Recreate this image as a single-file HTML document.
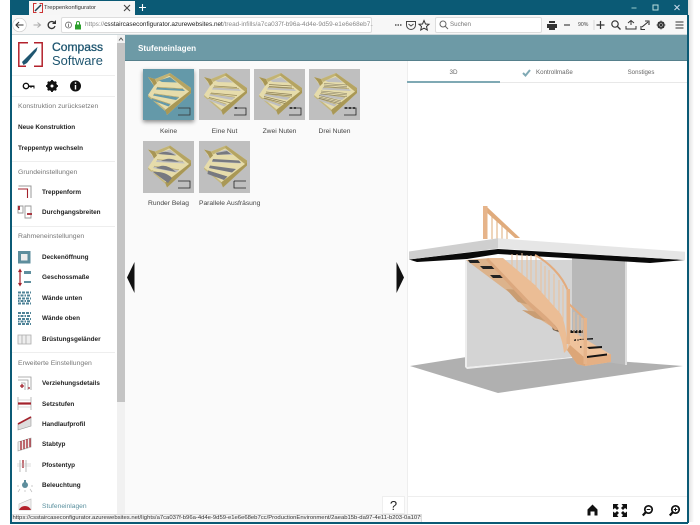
<!DOCTYPE html>
<html><head><meta charset="utf-8"><title>Treppenkonfigurator</title>
<style>
html,body{margin:0;padding:0;width:700px;height:525px;overflow:hidden;background:#fff;font-family:"Liberation Sans",sans-serif}
.a{position:absolute;white-space:nowrap}
.h{left:18px;font-size:6.850px;color:#777;line-height:10px;margin-top:1px}
.i{left:42px;font-size:6.400px;color:#222;font-weight:bold;line-height:10px;margin-top:1px}
.b{left:18px;font-size:6.400px;color:#222;font-weight:bold;line-height:10px;margin-top:1px}
.l{font-size:6.700px;color:#444;line-height:10px;text-align:center;margin-top:1px}
.sep{position:absolute;left:12px;width:103px;height:1px;background:#eee}
</style></head><body>
<svg width="0" height="0" style="position:absolute"><defs>
<symbol id="st" viewBox="0 0 51 51">
<path d="M5 8L12 10L27 4L48 19V24L24 46L22 40L5 26L11 17Z" fill="#e6dcab"/>
<path d="M5 8L12 10L14 14L11 17L9 13Z" fill="#a89655"/>
<path d="M12 10L27 4L28 6L14 13Z" fill="#c2b374"/>
<path d="M27 4L48 19V24L44 21L26 6.500Z" fill="#b5a462"/>
<path d="M22 41L48 21V24L24 46Z" fill="#a99856"/>
<path d="M5 26L22 40V42L5 27.500Z" fill="#c6b87c"/>
<path d="M16 11.500L27 8L34 13.500L19 13Z" fill="currentColor"/>
<path d="M14 18.500L40 20L42 22L13 20.500Z" fill="currentColor"/>
<path d="M11 25L36 28.500L33 31L10 26.500Z" fill="currentColor"/>
<path d="M9 29.500L27.500 35.500L25.500 37.500L8.500 31Z" fill="currentColor"/>
<path d="M14 18.200L40 19.700M11 24.700L36 28.200M9 29.200L27.500 35.200" stroke="#b3a468" stroke-width=".7" fill="none"/>
</symbol>
</defs></svg>

<!-- window chrome -->
<div class="a" style="left:10px;top:0;width:678px;height:15px;background:#0b5a75"></div>
<div class="a" style="left:29px;top:1px;width:106px;height:14px;background:#f6f6f6"></div>
<svg class="a" style="left:33px;top:3px" width="10" height="10" viewBox="0 0 10 10"><path d="M3.500.5H.5V9.500H3.500M6.500.5H9.500V9.500H6.500" fill="none" stroke="#c33" stroke-width="1"/><path d="M2 8L8 2" stroke="#245" stroke-width="1.500"/></svg>
<div class="a" style="left:44px;top:3px;font-size:5.800px;line-height:10px;color:#333">Treppenkonfigurator</div>
<svg class="a" style="left:123px;top:4px" width="8" height="8"><path d="M1 1L7 7M7 1L1 7" stroke="#444" stroke-width="1.100"/></svg>
<svg class="a" style="left:138px;top:3px" width="9" height="9"><path d="M4.500 1V8M1 4.500H8" stroke="#fff" stroke-width="1.100"/></svg>
<svg class="a" style="left:630px;top:3px" width="50" height="10"><path d="M1.500 5H6.500" stroke="#9cc" stroke-width="1"/><rect x="23" y="2" width="5" height="5" fill="none" stroke="#bdd" stroke-width="1"/><path d="M44.500 2L49.500 7M49.500 2L44.500 7" stroke="#cde" stroke-width="1"/></svg>
<div class="a" style="left:10px;top:15px;width:678px;height:20px;background:#f7f7f7"></div>
<div class="a" style="left:10px;top:34px;width:678px;height:1px;background:#cfd8db"></div>
<svg class="a" style="left:12px;top:17px" width="48" height="16"><circle cx="7.500" cy="8" r="6.800" fill="#fff" stroke="#ccc" stroke-width=".7"/><path d="M11.500 8H4.500M7 5L4 8L7 11" fill="none" stroke="#333" stroke-width="1.100"/><path d="M28 8H21.500M25.500 5.500L28.500 8L25.500 10.500" fill="none" stroke="#aaa" stroke-width="1"/><path d="M42.500 6A3.500 3.500 0 1 0 43 9" fill="none" stroke="#333" stroke-width="1.300"/><path d="M44 3V7H40Z" fill="#333"/></svg>
<div class="a" style="left:61px;top:17px;width:311px;height:16px;background:#fff;border:1px solid #ddd;box-sizing:border-box;border-radius:2px"></div>
<svg class="a" style="left:65px;top:20px" width="18" height="10"><circle cx="3.500" cy="5" r="3" fill="none" stroke="#666" stroke-width=".8"/><path d="M3.500 4V7M3.500 2.700V3.400" stroke="#666" stroke-width=".8"/><rect x="10" y="4.500" width="6" height="5" fill="#2ca02c"/><path d="M11.500 5V3A1.500 1.500 0 0 1 14.500 3V5" fill="none" stroke="#2ca02c" stroke-width="1"/></svg>
<div class="a" style="left:85px;top:20px;font-size:6.400px;line-height:10px;color:#888;width:288px;overflow:hidden">https://<span style="color:#222">csstaircaseconfigurator.azurewebsites.net</span>/tread-infills/a7ca037f-b96a-4d4e-9d59-e1e6e68eb7..</div>
<svg class="a" style="left:392px;top:18px" width="40" height="14"><path d="M3 7H4.500M5.500 7H7M8 7H9.500" stroke="#333" stroke-width="1.200"/><path d="M14.500 3.500H23.500V7A4.500 4.500 0 0 1 14.500 7Z" fill="none" stroke="#444" stroke-width="1"/><path d="M16.500 6L19 8L21.500 6" fill="none" stroke="#444" stroke-width="1"/><path d="M32 2.500L33.500 6L37 6.300L34.500 8.500L35.300 12L32 10.200L28.700 12L29.500 8.500L27 6.300L30.500 6Z" fill="none" stroke="#333" stroke-width="1"/></svg>
<div class="a" style="left:435px;top:17px;width:107px;height:16px;background:#fff;border:1px solid #ddd;box-sizing:border-box;border-radius:2px"></div>
<svg class="a" style="left:439px;top:20px" width="10" height="10"><circle cx="4" cy="4" r="3" fill="none" stroke="#666" stroke-width="1"/><path d="M6 6L9 9" stroke="#666" stroke-width="1"/></svg>
<div class="a" style="left:450px;top:20px;font-size:6.200px;line-height:10px;color:#777">Suchen</div>
<svg class="a" style="left:547px;top:18px" width="125" height="14">
<path d="M2 3H8V5H2ZM0 6H10V10H0ZM2 9H8V12H2Z" fill="#333"/>
<path d="M17 7H23" stroke="#444" stroke-width="1.200"/>
<path d="M47 2V12" stroke="#ccc" stroke-width=".7"/>
<path d="M53.500 3V11M49.500 7H57.500" stroke="#333" stroke-width="1.200"/>
<circle cx="68" cy="6" r="3.200" fill="none" stroke="#333" stroke-width="1.200"/><path d="M70.500 8.500L73.500 11.500" stroke="#333" stroke-width="1.300"/>
<path d="M81 5L84 2.500L87 5M84 3V7M79 8V11H89V8" fill="none" stroke="#333" stroke-width="1"/>
<path d="M95 9L101 4M98 3H102V7M94 8V11.500H98" fill="none" stroke="#333" stroke-width="1.100"/>
<circle cx="114" cy="7" r="3" fill="none" stroke="#333" stroke-width="1.500"/><path d="M114 2.500V11.500M109.500 7H118.500M111 4L117 10M117 4L111 10" stroke="#333" stroke-width=".8"/>
</svg>
<div class="a" style="left:578px;top:20px;font-size:5.200px;line-height:10px;color:#444">90%</div>
<svg class="a" style="left:675px;top:20px" width="10" height="10"><path d="M0 2H8M0 5H8M0 8H8" stroke="#333" stroke-width="1.100" transform="translate(.5 0)"/></svg>
<div class="a" style="left:688px;top:0;width:6px;height:522px;background:linear-gradient(90deg,#ddd,#fff)"></div>

<!-- frame -->
<div class="a" style="left:10px;top:15px;width:1.500px;height:508px;background:#0b5a75"></div>
<div class="a" style="left:687px;top:15px;width:1.500px;height:508px;background:#0b5a75"></div>
<div class="a" style="left:10px;top:522px;width:678px;height:1.500px;background:#0b5a75"></div>

<!-- header -->
<div class="a" style="left:125px;top:35px;width:562px;height:26px;background:#6d9aa6;border-bottom:1px solid #56808c;box-sizing:border-box"></div>
<div class="a" style="left:138px;top:43px;font-size:8.100px;font-weight:bold;line-height:11px;color:#fff">Stufeneinlagen</div>

<!-- sidebar -->
<div class="a" style="left:116.500px;top:35px;width:8.500px;height:487px;background:#f1f1f1"></div>
<div class="a" style="left:117px;top:43px;width:7.500px;height:359px;background:#c4c4c4"></div>
<svg class="a" style="left:117px;top:36px" width="8" height="6"><path d="M2 4.500L4 2L6 4.500" fill="none" stroke="#555" stroke-width="1"/></svg>
<svg class="a" style="left:18px;top:42px" width="25" height="25" viewBox="0 0 25 25"><path d="M10 .8H.8V24.200H8M16 .8H24.200V24.200H16" fill="none" stroke="#b3222c" stroke-width="1.500"/><path d="M4 20L7 17L16 8L19.500 5L18.500 9L9 21L5.500 23Z" fill="#1f5670"/></svg>
<div class="a" style="left:52px;top:41px;font-size:12.100px;line-height:13px;color:#1f5670;-webkit-text-stroke:.3px #1f5670">Compass</div>
<div class="a" style="left:52px;top:54px;font-size:12.900px;line-height:13px;color:#1f5670">Software</div>
<div class="sep" style="top:75px"></div>
<svg class="a" style="left:21px;top:79px" width="70" height="14"><circle cx="5" cy="7" r="2.700" fill="none" stroke="#111" stroke-width="1.400"/><path d="M7.500 6.500H13.500V9.500H12.500V8H10.500V9H9.500V8H7.500Z" fill="#111"/><circle cx="31" cy="7" r="3.800" fill="none" stroke="#111" stroke-width="2.600"/><path d="M31 1V13M25 7H37M26.800 2.800L35.200 11.200M35.200 2.800L26.800 11.200" stroke="#111" stroke-width="1.800"/><circle cx="31" cy="7" r="1.500" fill="#fff"/><circle cx="54.500" cy="7" r="5.500" fill="#111"/><path d="M54.500 6V10.500M54.500 3.300V4.700" stroke="#fff" stroke-width="1.400"/></svg>
<div class="sep" style="top:96px"></div>
<div class="a h" style="top:101px">Konstruktion zurücksetzen</div>
<div class="a b" style="top:122px">Neue Konstruktion</div>
<div class="a b" style="top:143px">Treppentyp wechseln</div>
<div class="sep" style="top:161px"></div>
<div class="a h" style="top:167px">Grundeinstellungen</div>
<div class="a i" style="top:187px">Treppenform</div>
<div class="a i" style="top:207px">Durchgangsbreiten</div>
<div class="sep" style="top:226px"></div>
<div class="a h" style="top:231px">Rahmeneinstellungen</div>
<div class="a i" style="top:252px">Deckenöffnung</div>
<div class="a i" style="top:272px">Geschossmaße</div>
<div class="a i" style="top:293px">Wände unten</div>
<div class="a i" style="top:313px">Wände oben</div>
<div class="a i" style="top:334px">Brüstungsgeländer</div>
<div class="sep" style="top:352px"></div>
<div class="a h" style="top:358px">Erweiterte Einstellungen</div>
<div class="a i" style="top:378px">Verziehungsdetails</div>
<div class="a i" style="top:399px">Setzstufen</div>
<div class="a i" style="top:419px">Handlaufprofil</div>
<div class="a i" style="top:439px">Stabtyp</div>
<div class="a i" style="top:460px">Pfostentyp</div>
<div class="a i" style="top:480px">Beleuchtung</div>
<div class="a i" style="top:501px;color:#5b919f;font-weight:normal;font-size:6.700px">Stufeneinlagen</div>
<!-- sidebar icons -->
<svg class="a" style="left:17px;top:184px" width="16" height="330" viewBox="0 0 16 330">
<path d="M1.500 2H14V14M1.500 5H10.500V14" fill="none" stroke="#999" stroke-width="1"/><path d="M1 5H10.500V14" fill="none" stroke="#a3222c" stroke-width="1.100"/>
<path d="M1 22H6V29H1ZM8 22H14V34H8Z" fill="none" stroke="#999" stroke-width=".9"/><path d="M2 22V26M10 30H15" stroke="#a3222c" stroke-width="1.800"/>
<rect x="1" y="67" width="12.500" height="12.500" fill="#5e8e9d"/><rect x="4" y="70" width="6.500" height="6.500" fill="#eee"/>
<path d="M3 86V101" stroke="#a3222c" stroke-width="1.200"/><path d="M1.500 88L3 85.500L4.500 88M1.500 99L3 101.500L4.500 99" fill="#a3222c" stroke="#a3222c"/><path d="M7 87H14V90H7ZM7 97H14V99H7Z" fill="#5e8e9d"/>
<path d="M1 108.500H14M1 114.500H14M1 119.500H14" stroke="#4f8397" stroke-width="2" stroke-dasharray="3 1"/><path d="M1 111.500H14M1 117H14" stroke="#4f8397" stroke-width="2" stroke-dasharray="1.500 1 3 1"/>
<path d="M1 129H14M1 135H14M1 140H14" stroke="#4f8397" stroke-width="2" stroke-dasharray="3 1"/><path d="M1 132H14M1 137.500H14" stroke="#4f8397" stroke-width="2" stroke-dasharray="1.500 1 3 1"/>
<path d="M1 151H14V160H1ZM5 151V160M9 151V160" fill="#eee" stroke="#aaa" stroke-width=".8"/>
<path d="M1 193H14V206M1 196H11V206M4 199H8V206" fill="none" stroke="#999" stroke-width=".8"/><path d="M3 202H7M5 200V204M11 204H13" stroke="#a3222c" stroke-width="1.300"/>
<path d="M1 213V226M14 213V226" stroke="#aaa" stroke-width=".8"/><path d="M1 219.500H14" stroke="#a3222c" stroke-width="2.200"/><path d="M1 216H14M1 223H14" stroke="#ccc" stroke-width=".7"/>
<path d="M1 240L14 233V242L1 246Z" fill="#ddd" stroke="#999" stroke-width=".6"/><path d="M1 240L14 233" stroke="#a3222c" stroke-width="1.600"/>
<path d="M1 258L14 254V263L1 267Z" fill="#eee" stroke="#999" stroke-width=".6"/><path d="M4 257V266M7 256V265M10 255V264M13 254.500V263" stroke="#a3222c" stroke-width="1.300"/>
<path d="M3 276V288M9 276V288" stroke="#aaa" stroke-width=".8"/><path d="M6 276V284" stroke="#a3222c" stroke-width="1.300"/><path d="M0 280H14M0 282H14" stroke="#bbb" stroke-width=".6"/>
<circle cx="8" cy="301" r="3" fill="#5e8e9d"/><rect x="7" y="296" width="2" height="3" fill="#5e8e9d"/><path d="M3 305L1 308M8 306V308M13 305L15 308M2 302H0M14 302H16" stroke="#bbb" stroke-width=".7"/>
<path d="M2 320L14 315V326H2Z" fill="#f2f2f2" stroke="#bbb" stroke-width=".6"/><path d="M2 326A6.500 6.500 0 0 1 14 326Z" fill="#b3222c"/>
</svg>

<!-- content -->
<div class="a" style="left:125px;top:61px;width:282px;height:461px;background:#fafafa"></div>
<div class="a" style="left:406.500px;top:61px;width:1px;height:461px;background:#eee"></div>

<!-- thumbs -->
<div class="a" style="left:143px;top:69px;width:51px;height:51px;background:#6499a9;color:#6499a9;box-shadow:0 2px 4px rgba(0,0,0,.45)"><svg width="51" height="51"><use href="#st"/><path d="M35 39H47V46H35" fill="none" stroke="#333" stroke-width=".8"/></svg></div>
<div class="a" style="left:199px;top:69px;width:51px;height:51px;background:#bfbfbf;color:#bfbfbf"><svg width="51" height="51"><use href="#st"/><path d="M35 39H47V46H35" fill="none" stroke="#222" stroke-width=".8"/><path d="M36 39H38" stroke="#111" stroke-width="1.500"/><path d="M15 17L38 18.500M12 24L38 26.500M10 28.500L32 34" stroke="#97895a" stroke-width=".8"/></svg></div>
<div class="a" style="left:254px;top:69px;width:51px;height:51px;background:#bfbfbf;color:#bfbfbf"><svg width="51" height="51"><use href="#st"/><path d="M35 39H47V46H35" fill="none" stroke="#222" stroke-width=".8"/><path d="M36 39H38M40 39H42" stroke="#111" stroke-width="1.500"/><path d="M15 15.500L38 17M15 17.500L38 19M12 23L38 25.500M12 24.500L38 27M10 27.500L32 33M10 29L31 34.500" stroke="#8d8058" stroke-width=".7"/></svg></div>
<div class="a" style="left:309px;top:69px;width:51px;height:51px;background:#bfbfbf;color:#bfbfbf"><svg width="51" height="51"><use href="#st"/><path d="M35 39H47V46H35" fill="none" stroke="#222" stroke-width=".8"/><path d="M36 39H38M40 39H42M44 39H46" stroke="#111" stroke-width="1.500"/><path d="M15 14.500L38 16M15 16L38 17.500M15 17.500L38 19M12 22L38 24.500M12 23.500L38 26M12 25L38 27.500M10 26.500L32 32M10 28L32 33.500M10 29.200L31 34.800" stroke="#7f7760" stroke-width=".6"/></svg></div>
<div class="a" style="left:143px;top:141px;width:51px;height:52px;background:#bfbfbf;color:#bfbfbf"><svg width="51" height="52"><use href="#st"/><path d="M35 40H47V47H35" fill="none" stroke="#222" stroke-width=".8"/><path d="M15 13Q23 8 33 14.500Z" fill="#777980"/><path d="M18 20Q27 15 36 21Z" fill="#777980"/><path d="M13 27Q22 21 33 31Z" fill="#777980"/><path d="M10 31Q22 30 29 37L25 42Z" fill="#777980"/></svg></div>
<div class="a" style="left:199px;top:141px;width:51px;height:52px;background:#bfbfbf;color:#bfbfbf"><svg width="51" height="52"><use href="#st"/><path d="M35 40H47M35 40V47H47" fill="none" stroke="#222" stroke-width=".8"/><path d="M17 12L28 10L32 13L18 14Z" fill="#777980"/><path d="M14 18L40 19.500L42 22L13 20.500Z" fill="#777980"/><path d="M11 24.500L37 28L33 31.500L10 27Z" fill="#777980"/><path d="M9 29.500L28.500 35.500L25 39L8.500 33Z" fill="#777980"/></svg></div>

<div class="a l" style="left:143px;top:126px;width:51px">Keine</div>
<div class="a l" style="left:199px;top:126px;width:51px">Eine Nut</div>
<div class="a l" style="left:254px;top:126px;width:51px">Zwei Nuten</div>
<div class="a l" style="left:309px;top:126px;width:51px">Drei Nuten</div>
<div class="a l" style="left:143px;top:198px;width:51px">Runder Belag</div>
<div class="a l" style="left:199px;top:198px;text-align:left">Parallele Ausfräsung</div>

<!-- arrows -->
<svg class="a" style="left:126px;top:261px" width="10" height="33"><path d="M8.500 1V32L1 16.500Z" fill="#111"/></svg>
<svg class="a" style="left:395px;top:261px" width="10" height="33"><path d="M1.500 1V32L9 16.500Z" fill="#111"/></svg>
<!-- ? -->
<div class="a" style="left:382px;top:496px;width:23px;height:18px;background:#fff;border:1px solid #eee;box-sizing:border-box;text-align:center;font-size:13px;line-height:18px;color:#222">?</div>

<!-- tabs -->
<div class="a l" style="left:407px;top:67px;width:93px;color:#666;font-size:6.300px">3D</div>
<svg class="a" style="left:522px;top:68px" width="9" height="9"><path d="M1 5L3.500 7.500L8 2" fill="none" stroke="#7fa9b4" stroke-width="2"/></svg>
<div class="a l" style="left:536px;top:67px;color:#666;font-size:6.200px;text-align:left">Kontrollmaße</div>
<div class="a l" style="left:595px;top:67px;width:92px;color:#666;font-size:6.100px">Sonstiges</div>
<div class="a" style="left:407px;top:82px;width:280px;height:1px;background:#e8e8e8"></div>
<div class="a" style="left:407px;top:81px;width:93px;height:1.500px;background:#7fa9b4"></div>
<div class="a" style="left:407px;top:496px;width:280px;height:1px;background:#eee"></div>

<!-- 3D scene -->
<svg class="a" style="left:0;top:0" width="700" height="525">
<path d="M410 366L498 352L683 366L498 393Z" fill="#b0b0b0"/>
<path d="M465 260H572V357L465 367Z" fill="#d4d4d4"/>
<path d="M465 260H467V367H465ZM465 367L572 357V358L467 369Z" fill="#eee"/>
<path d="M572 258L627 261V365L572 357Z" fill="#b8b8b8"/>
<path d="M625 261H627V365H625Z" fill="#ddd"/>
<path d="M409 259.500L498 249L685 260L650 263L498 254L467 259L417 262Z" fill="#0a0a0a"/>
<!-- top railing -->
<path d="M492 214V239M497 219V239M502 224V239M507 229V239" stroke="#e2b98e" stroke-width="1.200"/>
<path d="M487 207L520 238L515 238L485 211Z" fill="#e0ab7c"/>
<rect x="483" y="206" width="4.500" height="33" fill="#e6b48a"/>
<path d="M409 251.500L498 238.300V248.500L409 259.500Z" fill="#cfcfcf"/>
<path d="M498 238.300L685 251.700V260L498 248.500Z" fill="#e6e6e6"/>
<!-- balusters upper -->
<path d="M512 254V270M517 254V275M522 253V280M527 255V285M531 255V290M536 257V295M541 262V300M545 266V305M549 270V310M554 274V315M559 280V320M563 285V325" stroke="#ebbf98" stroke-width="1"/>
<!-- underside -->
<path d="M466 260L490 258L560 325V332L533 315L510 293Z" fill="#dcb38c"/>
<path d="M468 260H478L480 263H470ZM480 266H494L497 269H483ZM490 275H502L505 278H493Z" fill="#222"/>
<path d="M506 289L520 290L530 305L518 302ZM522 310L540 312L551 323L535 318Z" fill="#c99d73"/>
<path d="M550 322L558 327L561 333L553 330Z" fill="#7a6650"/>
<!-- stringer -->
<path d="M488 258L503 258L535 285L560 313C565 320 567 335 567 350L564 353C563 345 562 340 558 330C556 325 545 315 530 302Z" fill="#ebbd95"/>
<path d="M488 258L530 302C545 315 556 325 558 330L555 330C544 320 532 309 527 304L486 260Z" fill="#dca87e"/>
<!-- lower flight -->
<path d="M567 350L570 330L610 354L611 362L585 366L577 364Z" fill="#efc39c"/>
<path d="M585 358L611 354L611 362L585 366Z" fill="#e5b084"/>
<path d="M577 364L567 350L570 345L585 358L585 366Z" fill="#dca678"/>
<path d="M587 356L607 353.500V355.500L587 358ZM587 347L602 346V348L589 349ZM579 339L593 338V339.500L580 340ZM570 331L583 331V333L570 333Z" fill="#151515"/>
<path d="M570 331H583M574 340H580M580 347H583" stroke="#111" stroke-width="1.400" stroke-dasharray="2 1"/>
<!-- handrail & posts -->
<path d="M570 308V335M574 312V340M578 315V345M582 318V355" stroke="#ebbf98" stroke-width="1"/>
<path d="M535 255C548 262 562 275 568 291" fill="none" stroke="#e3ab7d" stroke-width="2"/>
<path d="M568 303L585 319" stroke="#e3ab7d" stroke-width="2"/>
<rect x="566.500" y="289" width="3.500" height="55" fill="#e6b48a"/>
<rect x="583.500" y="318" width="3.500" height="46" fill="#e6b48a"/>
<!-- bottom toolbar icons -->
<path d="M592.500 504.500L597.500 509.500V515.500H594.500V511.500H590.500V515.500H587.500V509.500Z" fill="#111"/>
<path d="M613 504H618.500L617 506L619 508L617 510L615 508L613 509.500ZM627 504H621.500L623 506L621 508L623 510L625 508L627 509.500ZM613 517H618.500L617 515L619 513L617 511L615 513L613 511.500ZM627 517H621.500L623 515L621 513L623 511L625 513L627 511.500Z" fill="#111"/>
<circle cx="648.500" cy="509.500" r="3.700" fill="none" stroke="#111" stroke-width="1.700"/><path d="M645.500 512.500L642.800 515.500" stroke="#111" stroke-width="2.200"/><path d="M646.700 509.500H650.300" stroke="#111" stroke-width="1"/>
<circle cx="675.500" cy="509.500" r="3.700" fill="none" stroke="#111" stroke-width="1.700"/><path d="M672.500 512.500L669.800 515.500" stroke="#111" stroke-width="2.200"/><path d="M673.700 509.500H677.300M675.500 507.700V511.300" stroke="#111" stroke-width="1"/>
</svg>

<!-- status -->
<div class="a" style="left:11.500px;top:514px;width:410px;height:8px;background:#f4f4f4;border-top:1px solid #ddd;border-right:1px solid #ddd;box-sizing:border-box;font-size:5.900px;line-height:7px;color:#333;overflow:hidden;padding-left:1px">https://csstaircaseconfigurator.azurewebsites.net/lights/a7ca037f-b96a-4d4e-9d59-e1e6e68eb7cc/ProductionEnvironment/2aeab15b-da97-4e11-b203-0a10798809af</div>
</body></html>
